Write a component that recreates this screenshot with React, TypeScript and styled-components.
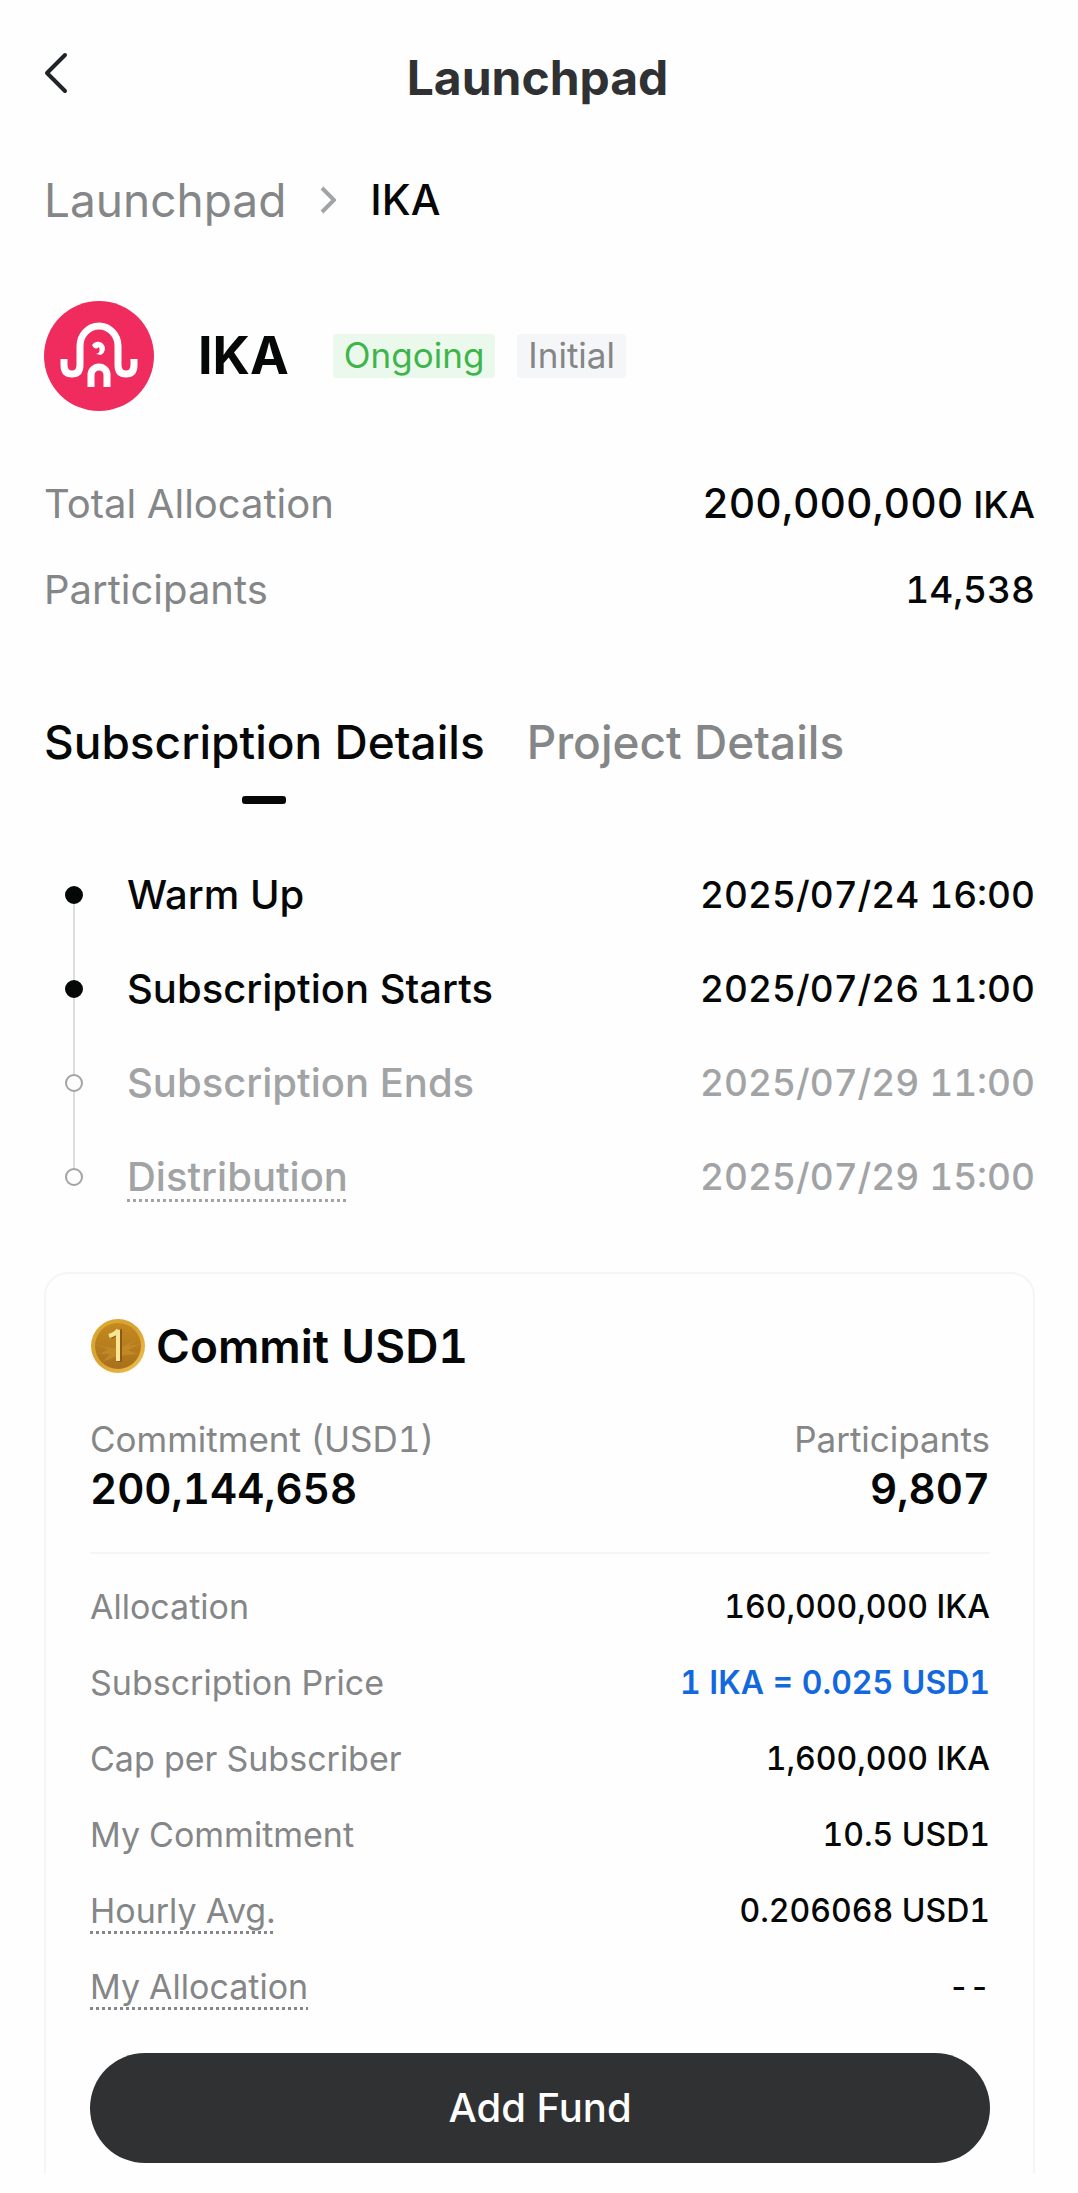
import React, { useState } from "react";
import styled, { createGlobalStyle } from "styled-components";

const GlobalStyle = createGlobalStyle`
  * { box-sizing: border-box; }
  body {
    margin: 0;
    background: #fefefe;
    color: #060707;
    font-family: Inter, "Noto Sans", "Liberation Sans", sans-serif;
    font-variant-numeric: tabular-nums;
  }
  h1, h2, p, dl, dt, dd, ol { margin: 0; padding: 0; }
  ol { list-style: none; }
  button { font-family: inherit; border: 0; background: none; padding: 0; cursor: pointer; }
  a { color: inherit; text-decoration: none; }
`;

const Page = styled.div`
  padding: 0 43px 0 44px;
`;

const Header = styled.header`
  display: grid;
  grid-template-columns: 48px 1fr 52px;
  align-items: center;
  height: 156px;
`;

const BackButton = styled.button`
  display: flex;
  align-items: flex-start;
  height: 54px;
`;

const PageTitle = styled.h1`
  font-size: 48px;
  line-height: 60px;
  font-weight: 700;
  text-align: center;
  color: #303133;
`;

const Breadcrumb = styled.nav`
  display: flex;
  align-items: center;
  gap: 34px;
  height: 60px;
  margin-top: 14px;
  font-size: 46px;
  line-height: 60px;
`;

const Crumb = styled.a`
  color: #848687;
`;

const CurrentCrumb = styled.span`
  font-size: 42px;
  font-weight: 500;
`;

const TokenRow = styled.section`
  display: flex;
  align-items: center;
  height: 110px;
  margin-top: 71px;
`;

const TokenName = styled.h2`
  margin: 0 44px;
  font-size: 52px;
  line-height: 64px;
  font-weight: 700;
`;

const Badge = styled.span<{ $tone: "green" | "grey" }>`
  height: 44px;
  margin-right: 22px;
  padding: 0 11px;
  border-radius: 4px;
  font-size: 35px;
  line-height: 43px;
  color: ${(p) => (p.$tone === "green" ? "#3eb54a" : "#848687")};
  background: ${(p) => (p.$tone === "green" ? "#ebf8ec" : "#f5f6f8")};
`;

const Summary = styled.dl`
  display: flex;
  flex-direction: column;
  gap: 26px;
  margin-top: 63px;
`;

const SummaryRow = styled.div`
  display: flex;
  justify-content: space-between;
  align-items: center;
  height: 60px;
  font-size: 40px;
  line-height: 60px;
`;

const Label = styled.dt`
  color: #848687;
`;

const Value = styled.dd<{ $accent?: boolean }>`
  font-weight: ${(p) => (p.$accent ? 600 : 500)};
  color: ${(p) => (p.$accent ? "#1268dc" : "inherit")};
`;

const SummaryValue = styled(Value)`
  font-size: 37px;
`;

const Big = styled.span`
  font-size: 41px;
`;

const Tabs = styled.div`
  display: flex;
  gap: 42px;
  margin-top: 94px;
`;

const Tab = styled.button<{ $active: boolean }>`
  display: flex;
  flex-direction: column;
  align-items: center;
  gap: 26px;
  font-size: 46px;
  line-height: 56px;
  font-weight: 500;
  color: ${(p) => (p.$active ? "#060707" : "#848687")};

  &::after {
    content: "";
    width: 44px;
    height: 8px;
    border-radius: 3px;
    background: ${(p) => (p.$active ? "#060707" : "transparent")};
  }
`;

const Timeline = styled.ol`
  margin-top: 44px;
`;

const Step = styled.li<{ $done: boolean }>`
  display: grid;
  grid-template-columns: 83px 1fr auto;
  align-items: center;
  height: 94px;
  font-size: 40px;
  line-height: 52px;
  font-weight: 500;
  color: ${(p) => (p.$done ? "#060707" : "#a1a3a5")};
`;

const StepTime = styled.time`
  font-size: 37px;
`;

const Rail = styled.span`
  display: flex;
  flex-direction: column;
  align-items: center;
  width: 60px;
  height: 94px;
`;

const RailLine = styled.span<{ $hidden?: boolean }>`
  flex: 1;
  width: 2px;
  background: ${(p) => (p.$hidden ? "transparent" : "#dcdddd")};
`;

const Dot = styled.span<{ $done: boolean }>`
  width: 18px;
  height: 18px;
  border-radius: 50%;
  border: 2px solid ${(p) => (p.$done ? "#060707" : "#a1a3a5")};
  background: ${(p) => (p.$done ? "#060707" : "#fefefe")};
`;

const Hint = styled.span`
  text-decoration: underline dotted 3px;
  text-underline-offset: 8px;
`;

const Card = styled.section`
  margin-top: 48px;
  padding: 43px 43px 10px 44px;
  border: 2px solid #f5f5f5;
  border-bottom: 0;
  border-radius: 24px 24px 0 0;
`;

const CardHeader = styled.div`
  display: flex;
  align-items: center;
  gap: 10px;
  height: 58px;
`;

const CardTitle = styled.h2`
  font-size: 46px;
  line-height: 56px;
  font-weight: 600;
`;

const Stats = styled.dl`
  display: flex;
  justify-content: space-between;
  margin-top: 39px;
  padding-bottom: 38px;
  border-bottom: 2px solid #f5f5f5;
`;

const Stat = styled.div<{ $end?: boolean }>`
  text-align: ${(p) => (p.$end ? "right" : "left")};
  font-size: 35px;
  line-height: 50px;
`;

const StatValue = styled.dd`
  font-size: 42px;
  line-height: 50px;
  font-weight: 600;
`;

const Details = styled.dl`
  padding-top: 15px;
`;

const DetailRow = styled.div`
  display: flex;
  justify-content: space-between;
  align-items: center;
  height: 76px;
  font-size: 34px;
  line-height: 50px;
`;

const DetailValue = styled(Value)`
  font-size: 32px;
`;

const PrimaryButton = styled.button`
  display: block;
  width: 100%;
  height: 110px;
  margin-top: 28px;
  border-radius: 55px;
  background: #303133;
  color: #fefefe;
  font-size: 40px;
  line-height: 52px;
  font-weight: 500;
`;

const BackIcon = () => (
  <svg width="24" height="44" viewBox="0 0 24 44" fill="none" aria-hidden="true">
    <path d="M21 4 L3 22 L21 40" stroke="#202328" strokeWidth="4" strokeLinecap="round" strokeLinejoin="round" />
  </svg>
);

const CrumbIcon = () => (
  <svg width="16" height="28" viewBox="0 0 16 28" fill="none" aria-hidden="true">
    <path d="M2 2 L14 14 L2 26" stroke="#a1a3a5" strokeWidth="4" />
  </svg>
);

const IkaLogo = () => (
  <svg width="110" height="110" viewBox="0 0 110 110" fill="none" role="img" aria-label="IKA">
    <circle cx="55" cy="55" r="55" fill="#f02c5e" />
    <g stroke="#fff" strokeWidth="7">
      <path d="M20 58 V64 Q20 73 28 73 Q36 73 36 64 V45 A19 20 0 0 1 74 45 V64 Q74 73 82 73 Q90 73 90 64 V58" />
      <path d="M47 86 V74 A8 8 0 0 1 63 74 V86" />
    </g>
    <path d="M48 44 A7 7 0 1 1 57 54 L52 53 Q57 52 55 46 Q51 50 48 44Z" fill="#fff" />
  </svg>
);

const CoinIcon = () => (
  <svg width="56" height="56" viewBox="0 0 56 56" fill="none" aria-hidden="true">
    <defs>
      <linearGradient id="rim" x1="0" y1="0" x2="1" y2="1">
        <stop offset="0" stopColor="#dca932" />
        <stop offset="0.5" stopColor="#d9a232" />
        <stop offset="1" stopColor="#f0c352" />
      </linearGradient>
      <linearGradient id="face" x1="0" y1="0" x2="0" y2="1">
        <stop offset="0" stopColor="#c58a20" />
        <stop offset="1" stopColor="#a8701c" />
      </linearGradient>
    </defs>
    <circle cx="28" cy="28" r="27" fill="url(#rim)" />
    <circle cx="28" cy="28" r="23" fill="url(#face)" />
    <path d="M6 27 L18 31 L10 36 L20 36 L12 44 L28 38 L48 36 L38 32 L50 26 L38 28 L46 22 L28 31Z" fill="#d09a31" opacity="0.45" />
    <path d="M21 19 L30 14 V44" stroke="#8c5a12" strokeWidth="4" />
    <path d="M19 18 Q26 16 28 12 V43" stroke="#fae594" strokeWidth="4" />
  </svg>
);

const steps = [
  { label: "Warm Up", time: "2025/07/24 16:00", done: true },
  { label: "Subscription Starts", time: "2025/07/26 11:00", done: true },
  { label: "Subscription Ends", time: "2025/07/29 11:00", done: false },
  { label: "Distribution", time: "2025/07/29 15:00", done: false, hint: true },
];

const details = [
  { label: "Allocation", value: "160,000,000 IKA" },
  { label: "Subscription Price", value: "1 IKA = 0.025 USD1", accent: true },
  { label: "Cap per Subscriber", value: "1,600,000 IKA" },
  { label: "My Commitment", value: "10.5 USD1" },
  { label: "Hourly Avg.", value: "0.206068 USD1", hint: true },
  { label: "My Allocation", value: "--", hint: true },
];

const tabs = ["Subscription Details", "Project Details"];

export default function App() {
  const [active, setActive] = useState(0);
  return (
    <>
      <GlobalStyle />
      <Page>
        <Header>
          <BackButton aria-label="Back"><BackIcon /></BackButton>
          <PageTitle>Launchpad</PageTitle>
        </Header>
        <Breadcrumb aria-label="Breadcrumb">
          <Crumb href="#launchpad">Launchpad</Crumb>
          <CrumbIcon />
          <CurrentCrumb aria-current="page">IKA</CurrentCrumb>
        </Breadcrumb>
        <TokenRow>
          <IkaLogo />
          <TokenName>IKA</TokenName>
          <Badge $tone="green">Ongoing</Badge>
          <Badge $tone="grey">Initial</Badge>
        </TokenRow>
        <Summary>
          <SummaryRow>
            <Label>Total Allocation</Label>
            <SummaryValue><Big>200,000,000</Big> IKA</SummaryValue>
          </SummaryRow>
          <SummaryRow>
            <Label>Participants</Label>
            <SummaryValue>14,538</SummaryValue>
          </SummaryRow>
        </Summary>
        <Tabs role="tablist">
          {tabs.map((name, i) => (
            <Tab key={name} role="tab" aria-selected={i === active} $active={i === active} onClick={() => setActive(i)}>
              {name}
            </Tab>
          ))}
        </Tabs>
        <Timeline>
          {steps.map((s, i) => (
            <Step key={s.label} $done={s.done}>
              <Rail>
                <RailLine $hidden={i === 0} />
                <Dot $done={s.done} />
                <RailLine $hidden={i === steps.length - 1} />
              </Rail>
              <span>{s.hint ? <Hint>{s.label}</Hint> : s.label}</span>
              <StepTime>{s.time}</StepTime>
            </Step>
          ))}
        </Timeline>
        <Card>
          <CardHeader>
            <CoinIcon />
            <CardTitle>Commit USD1</CardTitle>
          </CardHeader>
          <Stats>
            <Stat>
              <Label>Commitment (USD1)</Label>
              <StatValue>200,144,658</StatValue>
            </Stat>
            <Stat $end>
              <Label>Participants</Label>
              <StatValue>9,807</StatValue>
            </Stat>
          </Stats>
          <Details>
            {details.map((d) => (
              <DetailRow key={d.label}>
                <Label>{d.hint ? <Hint>{d.label}</Hint> : d.label}</Label>
                <DetailValue $accent={d.accent}>{d.value}</DetailValue>
              </DetailRow>
            ))}
          </Details>
          <PrimaryButton>Add Fund</PrimaryButton>
        </Card>
      </Page>
    </>
  );
}
